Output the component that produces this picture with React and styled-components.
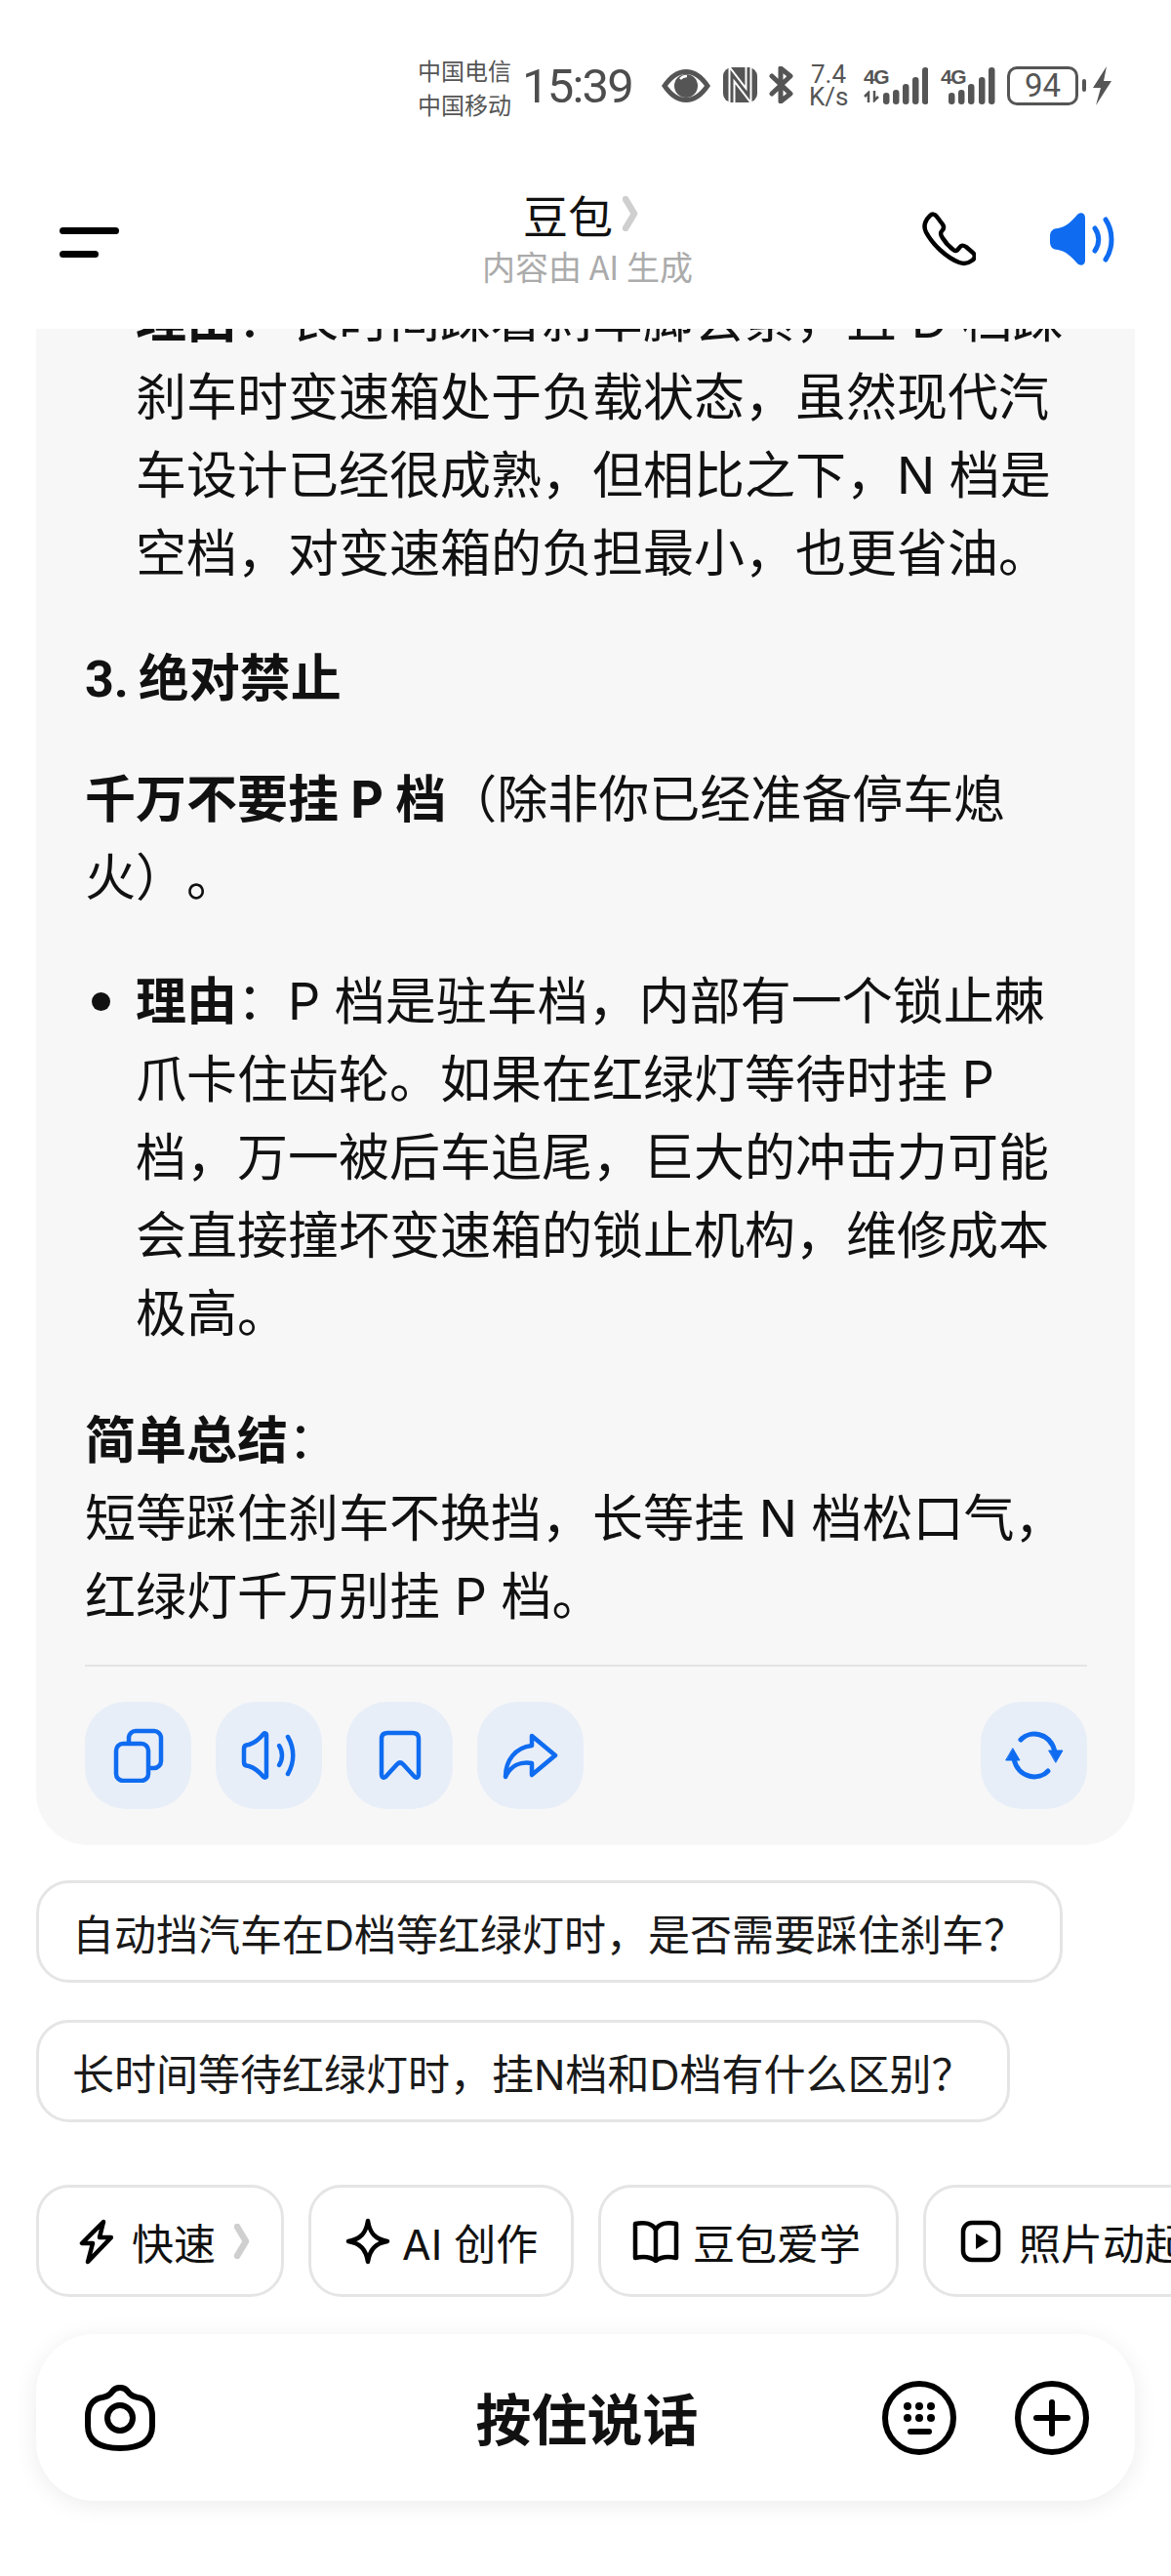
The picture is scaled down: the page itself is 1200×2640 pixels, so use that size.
import React from 'react';
import styled, { createGlobalStyle } from 'styled-components';

const GlobalStyle = createGlobalStyle`
  html, body { margin: 0; padding: 0; background: #fff; }
  body {
    font-family: "Inter", "Noto Sans CJK SC", sans-serif;
    color: #111;
    text-spacing-trim: space-all;
  }
`;

const BLUE = '#0f6cf0';
const GREY = '#555';

const Page = styled.div`
  width: 1200px;
  height: 2640px;
  overflow: hidden;
  display: flex;
  flex-direction: column;
  background: #fff;
`;

/* status bar */
const StatusBar = styled.div`
  height: 140px;
  box-sizing: border-box;
  padding: 68px 0 0 428px;
  display: flex;
  align-items: flex-start;
  color: ${GREY};
`;
const Carriers = styled.div`
  width: 100px;
  font-size: 24px;
  line-height: 35px;
  margin-top: -14px;
  font-family: "Noto Sans CJK SC", sans-serif;
`;
const Clock = styled.div`
  width: 142px;
  margin-left: 7px;
  margin-top: -2px;
  font-family: "Roboto", sans-serif;
  font-size: 49px;
  line-height: 46px;
  letter-spacing: -1.8px;
  color: #4d4d4d;
`;
const StatusIcon = styled.svg`
  flex: none;
  margin-left: ${p => p.$gap || 0}px;
  margin-top: ${p => p.$top || 0}px;
`;
const Speed = styled.div`
  width: 40px;
  margin-left: 16px;
  margin-top: -3px;
  font-family: "Roboto", sans-serif;
  font-size: 26px;
  line-height: 23px;
  text-align: center;
`;
const Signal = styled.div`
  position: relative;
  flex: none;
  margin-left: ${p => p.$gap}px;
  width: ${p => p.$w}px;
  height: 39px;
`;
const SignalLabel = styled.span`
  position: absolute;
  left: 0;
  top: 0;
  font-family: "Liberation Sans", sans-serif;
  font-weight: 700;
  font-size: 21px;
  line-height: 21px;
  letter-spacing: -1.5px;
`;
const BarsSvg = styled.svg`
  display: block;
`;
const DataArrows = styled.svg`
  position: absolute;
  left: 0;
  bottom: 2px;
`;
const Battery = styled.div`
  flex: none;
  width: 73px;
  height: 40px;
  margin: 0 0 0 12px;
  box-sizing: border-box;
  border: 3px solid ${GREY};
  border-radius: 10px;
  font-family: "Roboto", sans-serif;
  font-size: 33px;
  line-height: 34px;
  text-align: center;
`;
const BatteryTip = styled.div`
  flex: none;
  width: 4px;
  height: 13px;
  margin: 13px 0 0 4px;
  background: ${GREY};
  border-radius: 2px;
`;

/* nav */
const NavBar = styled.div`
  height: 197px;
  box-sizing: border-box;
  padding: 47px 57px 0 61px;
  display: grid;
  grid-template-columns: 1fr auto 1fr;
  align-items: start;
`;
const Burger = styled.div`
  width: 61px;
  margin-top: 46px;
  display: flex;
  flex-direction: column;
  gap: 17px;
`;
const BurgerLine = styled.span`
  display: block;
  width: ${p => p.$w}px;
  height: 7px;
  border-radius: 4px;
  background: #000;
`;
const TitleBlock = styled.div`
  display: flex;
  flex-direction: column;
  align-items: center;
  font-family: "Noto Sans CJK SC", sans-serif;
`;
const TitleRow = styled.div`
  display: flex;
  align-items: center;
  gap: 10px;
  margin-right: 14px;
  font-size: 46px;
  line-height: 64px;
  color: #111;
`;
const Subtitle = styled.div`
  font-size: 34px;
  line-height: 44px;
  color: #ababab;
`;
const NavActions = styled.div`
  justify-self: end;
  display: flex;
  gap: 75px;
  margin-top: 30px;
`;

/* answer card */
const Thread = styled.div`
  height: 1590px;
  overflow: hidden;
  flex: none;
  padding: 0 37px;
`;
const Card = styled.div`
  margin-top: -53px;
  padding: 0 49px 37px 50px;
  background: #f7f7f7;
  border-radius: 54px;
  font-size: 52px;
  line-height: 80px;
  color: #111;
`;
const Para = styled.p`
  margin: ${p => p.$top}px 0 0;
`;
const Heading = styled.h3`
  margin: 49px 0 0;
  font-family: "Roboto", "Noto Sans CJK SC", sans-serif;
  font-size: 52px;
  line-height: 80px;
  font-weight: 700;
  word-spacing: -3px;
`;
const List = styled.ul`
  margin: ${p => p.$top}px 0 0;
  padding: 0 0 0 52px;
`;
const Item = styled.li`
  &::marker { font-size: 60px; }
`;
const Strong = styled.strong`
  font-weight: 700;
`;
const Divider = styled.div`
  height: 2px;
  margin: 29px 0 36px;
  background: #e4e4e4;
`;
const ActionRow = styled.div`
  display: flex;
  gap: 25px;
`;
const ActionButton = styled.button`
  width: 109px;
  height: 110px;
  padding: 0;
  border: 0;
  border-radius: 42px;
  background: #e8eef8;
  display: flex;
  align-items: center;
  justify-content: center;
  ${p => p.$push && 'margin-left: auto;'}
`;

/* suggestions */
const Suggestions = styled.div`
  padding: 0 37px;
  display: flex;
  flex-direction: column;
  align-items: flex-start;
  gap: 38px;
`;
const Suggestion = styled.div`
  height: 105px;
  box-sizing: border-box;
  padding: 0 35px 0 34px;
  display: flex;
  align-items: center;
  border: 3px solid #e5e5e5;
  border-radius: 34px;
  font-size: 43px;
  white-space: nowrap;
  color: #1a1a1a;
`;

/* chips */
const ChipRow = styled.div`
  margin-top: 64px;
  padding-left: 37px;
  display: flex;
  gap: 25px;
  overflow: hidden;
`;
const Chip = styled.div`
  flex: none;
  width: ${p => p.$w}px;
  height: 115px;
  box-sizing: border-box;
  padding-left: ${p => p.$pad}px;
  display: flex;
  align-items: center;
  gap: ${p => p.$gap || 14}px;
  border: 3px solid #e5e5e5;
  border-radius: 34px;
  font-size: 43px;
  white-space: nowrap;
  color: #111;
`;

/* input bar */
const InputBar = styled.div`
  margin: 38px 37px 0;
  height: 171px;
  box-sizing: border-box;
  padding: 0 47px 0 50px;
  display: grid;
  grid-template-columns: 1fr auto 1fr;
  align-items: center;
  border-radius: 60px;
  background: #fff;
  box-shadow: 0 4px 24px rgba(0, 0, 0, 0.08);
`;
const HoldToTalk = styled.div`
  margin-top: -4px;
  font-size: 57px;
  font-weight: 700;
  color: #111;
`;
const RoundIcons = styled.div`
  justify-self: end;
  display: flex;
  gap: 60px;
`;

const Chevron = ({ w = 16, h = 36 }) => (
  <svg width={w} height={h} viewBox="0 0 16 36">
    <path d="M3 3 L12 18 L3 33" fill="none" stroke="#cfcfcf" strokeWidth="6.5" strokeLinecap="round" strokeLinejoin="round" />
  </svg>
);

const SignalBars = ({ w, bars, top = 39 }) => (
  <BarsSvg width={w} height={top} viewBox={`0 0 ${w} ${top}`}>
    {bars.map(([x, h]) => (
      <rect key={x} x={x} y={top - h} width="6.5" height={h} rx="3.2" fill={GREY} />
    ))}
  </BarsSvg>
);

const Stroke = ({ children, w, h, color = BLUE, sw = 4.5 }) => (
  <svg width={w} height={h} viewBox={`0 0 ${w} ${h}`} fill="none" stroke={color} strokeWidth={sw} strokeLinecap="round" strokeLinejoin="round">
    {children}
  </svg>
);

export default function App() {
  return (
    <Page>
      <GlobalStyle />
      <StatusBar>
        <Carriers>中国电信<br />中国移动</Carriers>
        <Clock>15:39</Clock>
        <StatusIcon $gap={0} $top={2} width="52" height="36" viewBox="0 0 52 36">
          <path d="M1 18 C9 6 17 1 26 1 S43 6 51 18 C43 30 35 35 26 35 S9 30 1 18Z" fill={GREY} />
          <path d="M7 18 C13 10 19 6 26 6 S39 10 45 18 C39 26 33 30 26 30 S13 26 7 18Z" fill="#fff" />
          <circle cx="26" cy="18" r="12" fill={GREY} />
          <path d="M20 11 A9 9 0 0 1 27 8" stroke="#fff" strokeWidth="2.5" fill="none" />
        </StatusIcon>
        <StatusIcon $gap={12} $top={1} width="35" height="36" viewBox="0 0 35 36">
          <rect x="0" y="0" width="35" height="36" rx="9" fill={GREY} />
          <path d="M9 36 V7 L26 29 V0" fill="none" stroke="#fff" strokeWidth="7" />
          <path d="M9 36 V7 L26 29 V0" fill="none" stroke={GREY} strokeWidth="3" />
        </StatusIcon>
        <StatusIcon $gap={12} $top={0} width="25" height="38" viewBox="0 0 25 38" fill="none" stroke={GREY} strokeWidth="5" strokeLinejoin="round" strokeLinecap="round">
          <path d="M3 10 L22 28 L12 36 V2 L22 10 L3 28" />
        </StatusIcon>
        <Speed>7.4<br />K/s</Speed>
        <Signal $gap={16} $w={66}>
          <SignalLabel>4G</SignalLabel>
          <SignalBars w={66} bars={[[20, 12], [30, 15], [40, 21], [50, 28], [60, 38]]} />
          <DataArrows width="16" height="12" viewBox="0 0 16 12" fill="none" stroke={GREY} strokeWidth="2.5">
            <path d="M5 12 V2 L1 6 M11 0 V10 L15 6" />
          </DataArrows>
        </Signal>
        <Signal $gap={13} $w={56}>
          <SignalLabel>4G</SignalLabel>
          <SignalBars w={56} bars={[[8, 12], [18, 15], [28, 21], [39, 28], [49, 38]]} />
        </Signal>
        <Battery>94</Battery>
        <BatteryTip />
        <StatusIcon $gap={6} $top={0} width="21" height="40" viewBox="0 0 21 40">
          <path d="M15 0 L1 22 H9 L4 40 L20 15 H12 Z" fill={GREY} />
        </StatusIcon>
      </StatusBar>

      <NavBar>
        <Burger>
          <BurgerLine $w={61} />
          <BurgerLine $w={40} />
        </Burger>
        <TitleBlock>
          <TitleRow>豆包<Chevron /></TitleRow>
          <Subtitle>内容由 AI 生成</Subtitle>
        </TitleBlock>
        <NavActions>
          <Stroke w={56} h={56} color="#000" sw={4.5}>
            <path d="M9 4 C11 2 14 2 16 5 L22 13 C24 16 23 18 21 20 C19 22 20 24 22 27 C25 32 29 36 33 39 C35 41 37 40 39 37 C41 34 43 34 46 36 L53 42 C56 45 55 48 52 50 C48 53 44 54 39 52 C26 47 12 34 5 21 C2 15 4 9 9 4 Z" />
          </Stroke>
          <svg width="68" height="56" viewBox="0 0 68 56" fill="none">
            <path d="M1 25 C1 20 4 17 9 17 C17 16 24 9 29 3 C32 0 37 1 37 6 V50 C37 55 32 56 29 53 C24 47 17 40 9 39 C4 39 1 36 1 31 Z" fill={BLUE} />
            <path d="M47 17 C52 24 52 33 47 40" stroke={BLUE} strokeWidth="5" strokeLinecap="round" />
            <path d="M58 8 C66 20 66 37 58 49" stroke={BLUE} strokeWidth="5" strokeLinecap="round" />
          </svg>
        </NavActions>
      </NavBar>

      <Thread>
        <Card>
          <List $top={0}>
            <Item>
              <Strong>理由</Strong>：长时间踩着刹车脚会累，且 D 档踩刹车时变速箱处于负载状态，虽然现代汽车设计已经很成熟，但相比之下，N 档是空档，对变速箱的负担最小，也更省油。
            </Item>
          </List>
          <Heading>3. 绝对禁止</Heading>
          <Para $top={43}><Strong>千万不要挂 P 档</Strong>（除非你已经准备停车熄火）。</Para>
          <List $top={43}>
            <Item>
              <Strong>理由</Strong>：P 档是驻车档，内部有一个锁止棘爪卡住齿轮。如果在红绿灯等待时挂 P 档，万一被后车追尾，巨大的冲击力可能会直接撞坏变速箱的锁止机构，维修成本极高。
            </Item>
          </List>
          <Para $top={50}>
            <Strong>简单总结</Strong>：<br />
            短等踩住刹车不换挡，长等挂 N 档松口气，<br />
            红绿灯千万别挂 P 档。
          </Para>
          <Divider />
          <ActionRow>
            <ActionButton>
              <Stroke w={53} h={56}>
                <rect x="17" y="3" width="33" height="38" rx="7" />
                <rect x="4" y="16" width="33" height="38" rx="7" fill="#e8eef8" />
              </Stroke>
            </ActionButton>
            <ActionButton>
              <Stroke w={58} h={50} sw={4.5}>
                <path d="M3 18 C3 15 5 14 8 14 C14 12 19 8 23 3 C24 2 26 2 26 4 V46 C26 48 24 48 23 47 C19 42 14 38 8 36 C5 36 3 35 3 32 Z" />
                <path d="M39 15 C43 21 43 29 39 35" />
                <path d="M48 6 C55 18 55 32 48 44" />
              </Stroke>
            </ActionButton>
            <ActionButton>
              <Stroke w={44} h={52}>
                <path d="M3 9 C3 5 5 3 9 3 H35 C39 3 41 5 41 9 V45 C41 49 38 50 36 47 L25 35 C23 33 21 33 19 35 L8 47 C6 50 3 49 3 45 Z" />
              </Stroke>
            </ActionButton>
            <ActionButton>
              <Stroke w={58} h={50}>
                <path d="M30 5 L54 25 L30 45 V33 C18 31 8 36 3 47 C3 30 13 17 30 15 Z" />
              </Stroke>
            </ActionButton>
            <ActionButton $push>
              <svg width="64" height="52" viewBox="0 0 64 52" fill="none" stroke={BLUE} strokeWidth="5" strokeLinecap="round">
                <path d="M18 10 C27 0 48 2 53 22" />
                <path d="M46 42 C37 52 16 50 11 30" />
                <path d="M47 21 H61 L54 33 Z" fill={BLUE} strokeWidth="1" strokeLinejoin="round" />
                <path d="M3 31 H17 L10 19 Z" fill={BLUE} strokeWidth="1" strokeLinejoin="round" />
              </svg>
            </ActionButton>
          </ActionRow>
        </Card>
      </Thread>

      <Suggestions>
        <Suggestion>自动挡汽车在D档等红绿灯时，是否需要踩住刹车？</Suggestion>
        <Suggestion>长时间等待红绿灯时，挂N档和D档有什么区别？</Suggestion>
      </Suggestions>

      <ChipRow>
        <Chip $w={254} $pad={40} $gap={19}>
          <Stroke w={36} h={48} color="#000" sw={4.5}>
            <path d="M26 4 L4 26 L15 26 L10 45 L34 20 L22 20 Z" />
          </Stroke>
          <span>快速</span>
          <Chevron w={16} h={36} />
        </Chip>
        <Chip $w={272} $pad={35} $gap={12}>
          <svg width="46" height="48" viewBox="0 0 46 48" fill="none" stroke="#000" strokeWidth="4.5" strokeLinejoin="round">
            <path d="M23 3 C25 16 31 22 43 24 C31 26 25 32 23 45 C21 32 15 26 3 24 C15 22 21 16 23 3 Z" />
          </svg>
          <span>AI 创作</span>
        </Chip>
        <Chip $w={308} $pad={32} $gap={14}>
          <Stroke w={48} h={44} color="#000" sw={4.5}>
            <path d="M24 10 C21 4 13 2 3 4 V39 C12 37 19 38 24 42 C29 38 36 37 45 39 V4 C35 2 27 4 24 10 Z" />
            <path d="M24 10 V40" />
          </Stroke>
          <span>豆包爱学</span>
        </Chip>
        <Chip $w={340} $pad={35} $gap={18}>
          <svg width="42" height="44" viewBox="0 0 42 44" fill="none">
            <rect x="3" y="3" width="36" height="38" rx="9" stroke="#000" strokeWidth="4.5" />
            <path d="M16 14 L29 22 L16 30 Z" fill="#000" />
          </svg>
          <span>照片动起来</span>
        </Chip>
      </ChipRow>

      <InputBar>
        <Stroke w={72} h={68} color="#000" sw={6}>
          <path d="M3 32 C3 20 10 14 18 13 C24 12 26 10 28 7 C30 4 32 3 36 3 C40 3 42 4 44 7 C46 10 48 12 54 13 C62 14 69 20 69 32 V42 C69 56 60 65 36 65 C12 65 3 56 3 42 Z" />
          <circle cx="36" cy="34" r="13" />
        </Stroke>
        <HoldToTalk>按住说话</HoldToTalk>
        <RoundIcons>
          <svg width="76" height="76" viewBox="0 0 76 76" fill="none">
            <circle cx="38" cy="38" r="35" stroke="#000" strokeWidth="6" />
            {[26, 38, 50].map(x => [26, 38].map(y => (
              <circle key={`${x}-${y}`} cx={x} cy={y} r="4" fill="#000" />
            )))}
            <path d="M29 52 H48" stroke="#000" strokeWidth="6" strokeLinecap="round" />
          </svg>
          <svg width="76" height="76" viewBox="0 0 76 76" fill="none" stroke="#000" strokeLinecap="round">
            <circle cx="38" cy="38" r="35" strokeWidth="6" />
            <path d="M22 38 H54 M38 22 V54" strokeWidth="6" />
          </svg>
        </RoundIcons>
      </InputBar>
    </Page>
  );
}
